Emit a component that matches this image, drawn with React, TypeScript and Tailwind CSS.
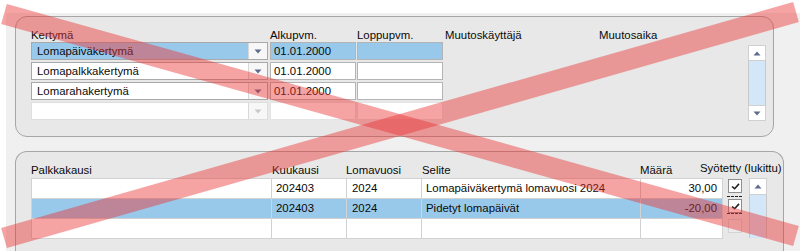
import React from 'react';

const Tri = ({ up, light }: { up?: boolean; light?: boolean }) => (
  <svg width="8" height="5" viewBox="0 0 8 5">
    <path d={up ? 'M0.5 4.5 L4 0.5 L7.5 4.5 Z' : 'M0.5 0.5 L7.5 0.5 L4 4.5 Z'} fill={light ? '#c9c9c9' : '#5f6d8c'} />
  </svg>
);

const Combo = ({ text, selected, empty }: { text?: string; selected?: boolean; empty?: boolean }) => (
  <div
    className={`flex h-[18px] w-[237px] border ${empty ? 'border-[#dedede]' : 'border-[#a9a9a9]'} ${
      selected ? 'bg-[#99c9ea]' : 'bg-white'
    }`}
  >
    <div className="flex-1 pl-[5px] leading-[16px] whitespace-nowrap">{text}</div>
    <div className="flex w-[19px] items-center justify-center border-l border-[#d8d8d8] bg-[#f7f7f7]">
      <Tri light={empty} />
    </div>
  </div>
);

const DateField = ({ text, selected, empty }: { text?: string; selected?: boolean; empty?: boolean }) => (
  <div
    className={`h-[18px] w-[86px] border pl-[3px] leading-[16px] ${empty ? 'border-[#e4e4e4]' : 'border-[#b4b4b4]'} ${
      selected ? 'bg-[#99c9ea]' : 'bg-white'
    }`}
  >
    {text}
  </div>
);

const Check = ({ checked, focused, faded }: { checked?: boolean; focused?: boolean; faded?: boolean }) => (
  <div className="relative flex h-[20px] items-start pl-[5px] pt-[1px]">
    {focused && (
      <>
        <div className="absolute left-[4px] top-[-2px] w-[15px] border-t border-dashed border-[#222]" />
        <div className="absolute left-[4px] top-[15px] w-[15px] border-t border-dashed border-[#222]" />
      </>
    )}
    <div
      className={`flex h-[14px] w-[14px] items-center justify-center border ${
        faded ? 'border-[#d4d4d4] bg-[#ececec]' : 'border-[#8e8e8e] bg-white'
      }`}
    >
      {checked && (
        <svg width="9" height="7" viewBox="0 0 10 8">
          <path d="M1 4 L4 6.5 L9 1" stroke="#222" strokeWidth="1.8" fill="none" />
        </svg>
      )}
    </div>
  </div>
);

const rows2 = [
  { kausi: '', kk: '202403', vuosi: '2024', selite: 'Lomapäiväkertymä lomavuosi 2024', maara: '30,00', sel: false },
  { kausi: '', kk: '202403', vuosi: '2024', selite: 'Pidetyt lomapäivät', maara: '-20,00', sel: true },
  { kausi: '', kk: '', vuosi: '', selite: '', maara: '', sel: false },
];

export default function App() {
  return (
    <div className="relative h-[251px] w-[800px] overflow-hidden bg-white text-[11.4px] text-[#0a0a0a] [font-family:Liberation_Sans,Arial,sans-serif]">
      <div className="h-[13px]" />
      <div className="ml-[6px] flex h-[238px] flex-col bg-[#f0f0f0] pl-[9px] pt-[3px]">
        {/* Kertymät */}
        <div className="flex h-[121px] w-[759px] shrink-0 rounded-[12px] border border-[#a6a6a6] bg-[#e8e8e8] pl-[15px] pr-[7px]">
          <div className="flex-1 pt-[11px]">
            <div className="flex h-[14px] leading-[14px]">
              <div className="w-[239px]">Kertymä</div>
              <div className="w-[87px]">Alkupvm.</div>
              <div className="w-[88px]">Loppupvm.</div>
              <div className="w-[154px]">Muutoskäyttäjä</div>
              <div>Muutosaika</div>
            </div>
            <div className="flex flex-col gap-[2px]">
              {[
                { t: 'Lomapäiväkertymä', d: '01.01.2000', sel: true },
                { t: 'Lomapalkkakertymä', d: '01.01.2000' },
                { t: 'Lomarahakertymä', d: '01.01.2000' },
                { t: '', d: '', empty: true },
              ].map((r, i) => (
                <div key={i} className="flex">
                  <Combo text={r.t} selected={r.sel} empty={r.empty} />
                  <div className="ml-[2px]">
                    <DateField text={r.d} selected={r.sel} empty={r.empty} />
                  </div>
                  <div className="ml-[1px]">
                    <DateField selected={r.sel} empty={r.empty} />
                  </div>
                </div>
              ))}
            </div>
          </div>
          <div className="mt-[28px] flex h-[76px] w-[18px] flex-col">
            <div className="flex h-[16px] items-center justify-center border border-[#d0d0d0] bg-white">
              <Tri up />
            </div>
            <div className="flex-1 border-x border-[#c8c8c8] bg-[#d3e7f8]" />
            <div className="flex h-[16px] items-center justify-center border border-[#d0d0d0] bg-white">
              <Tri />
            </div>
          </div>
        </div>

        {/* Palkkakaudet */}
        <div className="mt-[14px] flex w-[769px] flex-1 flex-col rounded-t-[12px] border border-b-0 border-[#a6a6a6] bg-[#e8e8e8] pl-[15px] pt-[10px]">
          <div className="flex h-[16px] leading-[16px] whitespace-nowrap">
            <div className="w-[240px]">Palkkakausi</div>
            <div className="w-[75px] pl-[1px]">Kuukausi</div>
            <div className="w-[75px]">Lomavuosi</div>
            <div className="w-[219px] pl-[1px]">Selite</div>
            <div className="w-[60px]">Määrä</div>
            <div className="-mt-[2px]">Syötetty (lukittu)</div>
          </div>
          <div className="flex">
            <div className="flex flex-col border-l border-t border-[#d2d2d2]">
              {rows2.map((r, i) => (
                <div key={i} className={`flex h-[20px] leading-[19px] ${r.sel ? 'bg-[#99c9ea]' : 'bg-white'}`}>
                  <div className="w-[240px] border-b border-r border-[#d2d2d2] pl-[4px]">{r.kausi}</div>
                  <div className="w-[75px] border-b border-r border-[#d2d2d2] pl-[4px]">{r.kk}</div>
                  <div className="w-[75px] border-b border-r border-[#d2d2d2] pl-[5px]">{r.vuosi}</div>
                  <div className="w-[219px] border-b border-r border-[#d2d2d2] pl-[4px] whitespace-nowrap">{r.selite}</div>
                  <div className="w-[82px] border-b border-r border-[#d2d2d2] pr-[5px] text-right">{r.maara}</div>
                </div>
              ))}
            </div>
            <div className="flex w-[26px] flex-col">
              <Check checked />
              <Check checked focused />
              <Check faded />
            </div>
            <div className="flex h-[60px] w-[18px] flex-col">
              <div className="flex h-[17px] items-center justify-center border border-[#d0d0d0] bg-white">
                <Tri up />
              </div>
              <div className="flex-1 border-x border-[#c8c8c8] bg-[#d3e7f8]" />
            </div>
          </div>
        </div>
      </div>

      <svg className="pointer-events-none absolute inset-0" width="800" height="251" viewBox="0 0 800 251">
        <line x1="4" y1="14" x2="796" y2="236" stroke="rgba(232,50,50,0.45)" strokeWidth="21" />
        <line x1="4" y1="238" x2="796" y2="12" stroke="rgba(232,50,50,0.45)" strokeWidth="21" />
      </svg>
    </div>
  );
}
